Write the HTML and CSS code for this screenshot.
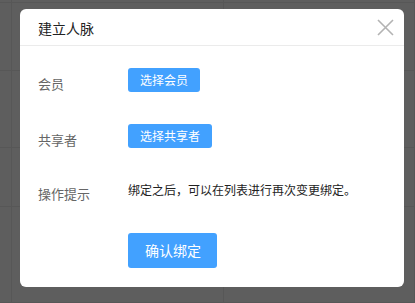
FILE: index.html
```html
<!DOCTYPE html>
<html lang="zh">
<head>
<meta charset="utf-8">
<link rel="stylesheet" href="styles.css">
</head>
<body>
<div class="backdrop">
  <div class="cell"></div><div class="cell"></div><div class="cell"></div>
  <div class="cell"></div><div class="cell"></div><div class="cell"></div>
  <div class="cell"></div><div class="cell"></div><div class="cell"></div>
  <div class="cell"></div><div class="cell"></div><div class="cell"></div>
  <div class="cell"></div><div class="cell"></div><div class="cell"></div>
</div>
<div class="dialog">
  <div class="header">
    <span class="title">建立人脉</span>
    <svg class="close" width="17" height="17" viewBox="0 0 17 17"><path d="M1 1 L16 16 M16 1 L1 16" stroke="#b3b3b3" stroke-width="1.6" fill="none"/></svg>
  </div>
  <div class="content">
    <div class="row">
      <div class="label">会员</div>
      <div class="value"><button class="btn small">选择会员</button></div>
    </div>
    <div class="row">
      <div class="label">共享者</div>
      <div class="value"><button class="btn small">选择共享者</button></div>
    </div>
    <div class="row hint">
      <div class="label">操作提示</div>
      <div class="value text">绑定之后，可以在列表进行再次变更绑定。</div>
    </div>
    <div class="row actions">
      <div class="label"></div>
      <div class="value"><button class="btn big">确认绑定</button></div>
    </div>
  </div>
</div>
</body>
</html>
```
FILE: styles.css
```css
* { box-sizing: border-box; }
html, body { margin: 0; padding: 0; }
body {
  width: 415px;
  height: 303px;
  overflow: hidden;
  background: #5e5e5e;
  font-family: "Noto Sans CJK SC", "Noto Sans", sans-serif;
  position: relative;
}
.backdrop {
  display: grid;
  grid-template-columns: 12px 212px 1fr;
  grid-template-rows: 3px 68px 77px 59px 1fr;
  height: 303px;
}
.cell {
  border-right: 1px solid #575757;
  border-bottom: 1px solid #575757;
}
.dialog {
  position: absolute;
  left: 20px;
  top: 9px;
  width: 384px;
  height: 278px;
  background: #fff;
  border-radius: 6px;
}
.header {
  height: 37px;
  border-bottom: 1px solid #ebebeb;
  display: flex;
  align-items: center;
  justify-content: space-between;
  padding: 0 10px 0 18px;
}
.title {
  font-size: 14px;
  color: #222;
  line-height: 20px;
  margin-top: 1px;
}
.content {
  padding: 22px 0 0 18px;
  display: flex;
  flex-direction: column;
  gap: 32px;
}
.row {
  display: flex;
  align-items: flex-start;
}
.label {
  width: 90px;
  font-size: 13px;
  color: #666;
  line-height: 24px;
  padding-top: 4px;
  margin-bottom: -4px;
  flex: none;
}
.hint .label { line-height: 20px; }
.actions .label { height: 0; padding: 0; margin: 0; }
.value.text {
  font-size: 12px;
  color: #222;
  line-height: 20px;
}
.actions { margin-top: 1px; }
.btn {
  border: none;
  background: #42a1ff;
  color: #fff;
  font-family: inherit;
  border-radius: 3px;
  display: block;
}
.btn.small {
  height: 24px;
  padding: 0 12px;
  font-size: 12px;
  line-height: 24px;
}
.btn.big {
  height: 35px;
  padding: 0 16px 0 17px;
  font-size: 14px;
  line-height: 35px;
}
```
